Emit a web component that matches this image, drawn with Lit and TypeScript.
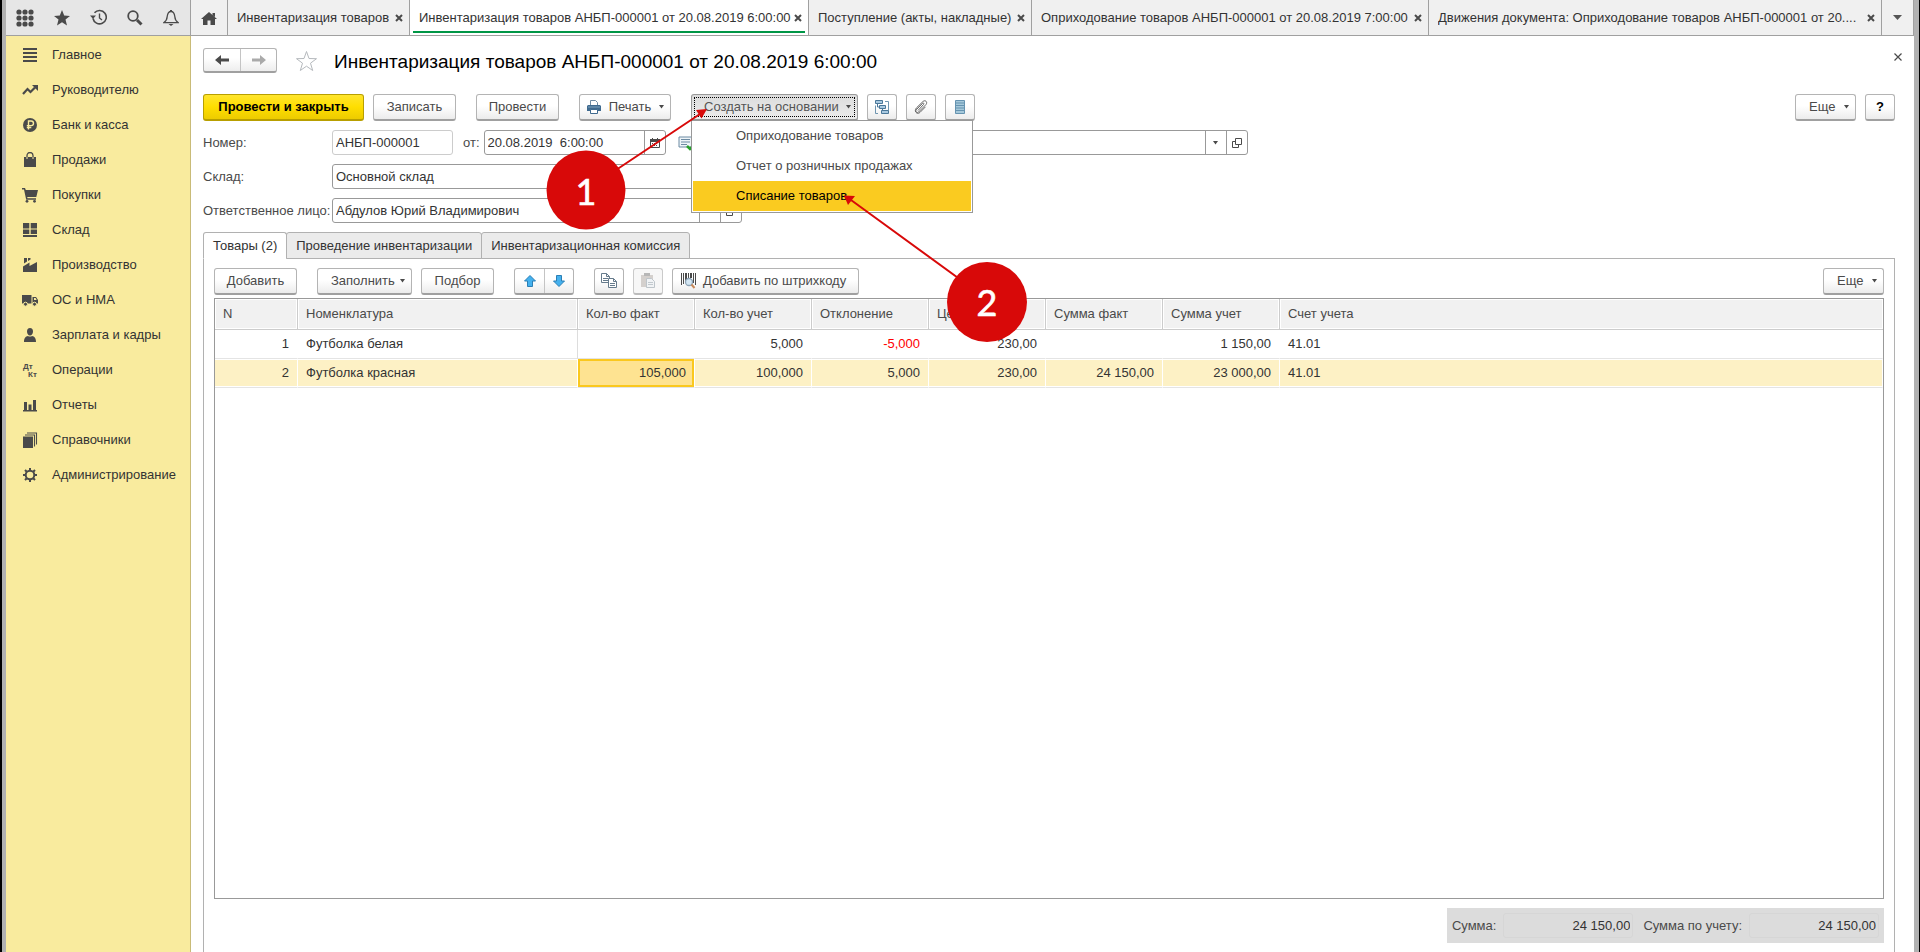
import { LitElement, html, css, svg } from "lit";
import { customElement } from "lit/decorators.js";

const svgIcon = (size: number, body: unknown, h = size) =>
  html`<svg width=${size} height=${h} viewBox="0 0 ${size} ${h}" fill="#4a4a4a" aria-hidden="true">${body}</svg>`;

const caret = html`<svg class="caret" width="5" height="4" viewBox="0 0 5 4" aria-hidden="true"><path d="M0 0h5L2.5 3.5z" fill="#4a4a4a" /></svg>`;
const openGlyph = svgIcon(10, svg`<path d="M3.5 .5h6v6h-6z M3.5 3.5h-3v6h6v-3" fill="none" stroke="#4a4a4a"/>`);
const cross = svgIcon(8, svg`<path d="M1 1l6 6M7 1l-6 6" stroke="#4a4a4a" stroke-width="2"/>`);
const thinCross = svgIcon(8, svg`<path d="M.5 .5l7 7M7.5 .5l-7 7" stroke="#4a4a4a" stroke-width="1.2"/>`);

const dots = [3, 9, 15].flatMap((y) => [3, 9, 15].map((x) => svg`<circle cx=${x} cy=${y} r="2.6"/>`));
const star = "M8 0l2.2 5.6 5.8.3-4.5 3.7L13 15.6 8 12.2 3 15.6 4.500 9.600 0 5.900l5.800-.3z";

const topIcons = [
  { name: "Меню функций", icon: svgIcon(18, dots) },
  { name: "Избранное", icon: svgIcon(16, svg`<path d=${star}/>`) },
  { name: "История", icon: svgIcon(17, svg`<path d="M3 9.500A6.700 6.700 0 1 0 4.500 3.800" fill="none" stroke="#4a4a4a" stroke-width="1.600"/><path d="M0 6.500h6L3 10z"/><path d="M9.500 4.500v4.500l2.500 2" fill="none" stroke="#4a4a4a" stroke-width="1.400"/>`) },
  { name: "Поиск", icon: svgIcon(16, svg`<circle cx="6" cy="6" r="4.800" fill="none" stroke="#4a4a4a" stroke-width="1.800"/><path d="M10 10l4.500 4.500" stroke="#4a4a4a" stroke-width="3"/>`) },
  { name: "Оповещения", icon: svgIcon(16, svg`<path d="M8 1.500c-3 0-3.500 2.500-3.800 5C4 9.500 3.200 11 1 12.600h14C12.800 11 12 9.500 11.800 6.500 11.500 4 11 1.500 8 1.500z" fill="none" stroke="#4a4a4a" stroke-width="1.300"/><path d="M7 0h2v2H7zM5.500 14h5L8 16z"/>`) },
];

const sections = [
  { name: "Главное", icon: svg`<path d="M1 1h14v2H1zM1 5h14v2H1zM1 9h14v2H1zM1 13h14v2H1z"/>` },
  { name: "Руководителю", icon: svg`<path d="M1 12l4.500-5 3 3L13 5.500" fill="none" stroke="#4a4a4a" stroke-width="2.200"/><path d="M10 3h6v6z"/>` },
  { name: "Банк и касса", icon: svg`<circle cx="8" cy="8" r="7"/><path d="M6.500 12.500v-8.500h2.700a2.300 2.300 0 0 1 0 4.600H4.800M4.800 10.500h4.500" fill="none" stroke="#f9eb9e" stroke-width="1.400"/>` },
  { name: "Продажи", icon: svg`<path d="M2 5h12v10H2z"/><path d="M5 7V3.500a2.500 2.500 0 0 1 6 0V7" fill="none" stroke="#4a4a4a" stroke-width="1.300"/><path d="M5 5v2M11 5v2" stroke="#f9eb9e"/>` },
  { name: "Покупки", icon: svg`<path d="M0 1h3l.8 2H16l-1.700 7H5.200l.3 1.300H14v1.500H4.200L2 2.500H0z"/><circle cx="5" cy="14.300" r="1.400"/><circle cx="12.500" cy="14.300" r="1.400"/>` },
  { name: "Склад", icon: svg`<path d="M1 1h6.300v5.500H1zM8.700 1H15v5.500H8.700zM1 7.500h6.300V12H1zM8.700 7.500H15V12H8.700zM1 13h14v2H1z"/>` },
  { name: "Производство", icon: svg`<path d="M1 15V9.500l6.500-4V9L15 5v10zM2 1h3v3.500L2 6.500zM6 1h2.500v1.500L6 4z"/>` },
  { name: "ОС и НМА", icon: svg`<path d="M0 3h9.500v8.500H0zM10.500 5H14l2 3v3.500h-5.500z"/><path d="M12 6h1.600l1 2H12z" fill="#f9eb9e"/><circle cx="3.500" cy="12.200" r="2" stroke="#f9eb9e"/><circle cx="12.500" cy="12.200" r="2" stroke="#f9eb9e"/>` },
  { name: "Зарплата и кадры", icon: svg`<path d="M8 1c2 0 3 1.500 3 3.500S9.800 8.500 8 8.500 5 6.500 5 4.500 6 1 8 1zM2 15c0-4 1.500-5.500 4-6 1 .8 3 .8 4 0 2.500.5 4 2 4 6z"/>` },
  { name: "Операции", icon: svg`<text x="1" y="7" class="mini">Дт</text><text x="6" y="15" class="mini">Кт</text>` },
  { name: "Отчеты", icon: svg`<path d="M1 13h14v1.500H1zM2 5h3v8H2zM6.500 7.500h3V13h-3zM11 3h3v10h-3z"/>` },
  { name: "Справочники", icon: svg`<path d="M1 4.500h10V16H1z"/><path d="M3 3h9.500v11.500M5 1h9.500v11.500" fill="none" stroke="#4a4a4a" stroke-width="1.100"/>` },
  { name: "Администрирование", icon: svg`<circle cx="8" cy="8" r="4.300" fill="none" stroke="#4a4a4a" stroke-width="2"/><path d="M8 1v2.500M8 12.500V15M1 8h2.500M12.500 8H15M3 3l1.800 1.800M11.200 11.200L13 13M13 3l-1.800 1.800M4.800 11.200L3 13" stroke="#4a4a4a" stroke-width="2"/>` },
];

const windows = [
  { title: "Инвентаризация товаров", size: "w1" },
  { title: "Инвентаризация товаров АНБП-000001 от 20.08.2019 6:00:00", size: "w2", active: true },
  { title: "Поступление (акты, накладные)", size: "w3" },
  { title: "Оприходование товаров АНБП-000001 от 20.08.2019 7:00:00", size: "w4" },
  { title: "Движения документа: Оприходование товаров АНБП-000001 от 20....", size: "w5" },
];

const columns = ["N", "Номенклатура", "Кол-во факт", "Кол-во учет", "Отклонение", "Цена", "Сумма факт", "Сумма учет", "Счет учета"];
const rows = [
  ["1", "Футболка белая", "", "5,000", "-5,000", "230,00", "", "1 150,00", "41.01"],
  ["2", "Футболка красная", "105,000", "100,000", "5,000", "230,00", "24 150,00", "23 000,00", "41.01"],
];

const printer = svgIcon(14, svg`<path d="M3.500 5V.5h5l2 2V5" fill="#fff" stroke="#6f8ba3"/><path d="M1 5h12l1 1v5H0V6z" fill="#3f6a8f"/><path d="M1 7h12" stroke="#7fa3c0"/><path d="M3.500 9.500h7v4h-7z" fill="#fff" stroke="#3f6a8f"/>`);
const structure = svgIcon(14, svg`<path d="M10 1.500h3.500v9M3 13.500H.5v-8" fill="none" stroke="#6f95b0"/><path d="M.5 .5h7v3h-7zM4.500 5.500h6v3h-6zM6.500 10.500h7v3h-7z" fill="#a9c9e0" stroke="#4a7799"/><path d="M2.500 3.500v3.500h2M7.500 8.500v2" fill="none" stroke="#4a7799"/>`);
const clip = svgIcon(16, svg`<path d="M5 11.500L10.500 5.500c.8-1 0-2-.9-1.200L3.200 10.800c-1.200 1.400.6 3.800 2.300 2.300L13 5.500c2-2.500-.8-5-3-3L3.500 8.800c-3 3.200.4 7.400 3.500 4.600l5.500-5.600" fill="none" stroke="#666" stroke-width="1"/>`);
const list = svgIcon(10, svg`<path d="M.5 .5h9v13h-9z" fill="#a5c8da" stroke="#6593b0"/><path d="M1 3h8M1 5.500h8M1 8h8M1 10.500h8" stroke="#6593b0"/>`, 14);
const calendar = svgIcon(10, svg`<path d="M.5 1.500h9v8h-9z" fill="none" stroke="#4a4a4a"/><path d="M0 1h10v3H0zM2 0h1v2H2zM7 0h1v2H7zM2 5h1v1H2zM4 5h1v1H4zM6 5h1v1H6zM2 7h1v1H2zM4 7h1v1H4zM6 7h1v1H6z"/>`);
const posted = svgIcon(16, svg`<path d="M1 2h13v10H1z" fill="#eef4f8" stroke="#6d8ba3"/><path d="M3 4.500h9M3 7h9M3 9.500h6" stroke="#6d8ba3"/><path d="M9 11l3 3 4-4" fill="none" stroke="#27a12b" stroke-width="2.500"/>`);
const arrowUp = svgIcon(12, svg`<path d="M6 .5L11.500 6H8.500v5.500h-5V6H.5z" fill="#45b1ee" stroke="#2b7fb5"/>`);
const arrowDown = svgIcon(12, svg`<path d="M6 11.500L.5 6h3V.5h5V6h3z" fill="#45b1ee" stroke="#2b7fb5"/>`);
const copyIcon = svgIcon(16, svg`<path d="M.5 .5h5l3 3v6h-8z" fill="#fff" stroke="#667b8c"/><path d="M5.500 .5v3h3M2 5.500h5M2 7.500h5" fill="none" stroke="#667b8c"/><path d="M7.500 5.500h5l3 3v6h-8z" fill="#fff" stroke="#667b8c"/><path d="M12.500 5.500v3h3M9 10.500h5M9 12.500h5" fill="none" stroke="#667b8c"/>`);
const pasteIcon = svgIcon(16, svg`<path d="M1 2h12v12H1z" fill="#c2bdb8"/><path d="M4 0h6v3H4z" fill="#999"/><path d="M6.500 5.500h5l3 3v6h-8z" fill="#eceff1" stroke="#a3adb5"/><path d="M8 9.500h5M8 11.500h5" stroke="#a9b3ba"/>`);
const barcode = svgIcon(16, svg`<path d="M1 0h1v12H1zM3 0h1v11H3zM5 0h2v9H5zM8 0h1v5H8zM10 0h2v5h-2zM13 0h1v10h-1zM15 0h1v12h-1z"/><circle cx="9" cy="9" r="3.500" fill="#d5e8f5" stroke="#8da3b5" stroke-width="1.300"/><path d="M11.500 11.500L14.500 15" stroke="#c98a5a" stroke-width="2"/>`);

@customElement("app-root")
export class AppRoot extends LitElement {
  static styles = css`
    :host {
      display: flex;
      flex-direction: column;
      position: relative;
      box-sizing: border-box;
      height: 100vh;
      overflow: hidden;
      background: #fff;
      color: #333;
      border-left: 2px solid #000;
      border-right: 1px solid #000;
      font: 13px/16px "Liberation Sans", Arial, sans-serif;
    }
    * { box-sizing: border-box; }
    svg { flex: none; display: block; }
    button, input { font: inherit; color: inherit; margin: 0; }
    button { padding: 0; border: 0; background: none; display: flex; align-items: center; justify-content: center; }
    .frame { flex: 1; min-height: 0; display: flex; flex-direction: column; border: solid #b1b1b1; border-width: 0 5px 0 4px; }
    .top { display: flex; height: 36px; background: #f0f0f0; border-bottom: 1px solid #a0a0a0; }
    .tools { width: 185px; flex: none; display: flex; align-items: center; justify-content: space-between; padding: 0 10px; background: #e6e6e6; border-right: 1px solid #a0a0a0; }
    .tools button { width: 18px; height: 18px; }
    .home { width: 37px; flex: none; border-right: 1px solid #a0a0a0; }
    .win { display: flex; align-items: center; min-width: 0; border-right: 1px solid #a0a0a0; padding: 0 6px 0 9px; position: relative; gap: 2px; }
    .win .name { flex: 1; min-width: 0; text-align: left; overflow: hidden; white-space: nowrap; text-overflow: ellipsis; display: block; }
    .win.active { background: #fff; }
    .win.active::after { content: ""; position: absolute; left: 3px; right: 3px; bottom: 2px; height: 2px; background: #009646; }
    .w1 { flex: 0 1 182px; } .w2 { flex: 0 1 399px; } .w3 { flex: 0 1 223px; } .w4 { flex: 0 1 397px; } .w5 { flex: 1 1 0; }
    .more { width: 32px; flex: none; border-right: 1px solid #a0a0a0; }
    .body { flex: 1; min-height: 0; display: flex; }
    nav { width: 185px; flex: none; background: #f9eb9e; border-right: 1px solid #c9bb78; padding-top: 1px; }
    nav a { display: flex; align-items: center; gap: 14px; height: 35px; padding-left: 16px; color: #333; text-decoration: none; }
    .mini { font: bold 8px "Liberation Sans", sans-serif; }
    main { flex: 1; min-width: 0; display: flex; flex-direction: column; padding: 12px 19px 0 12px; }
    .head { display: flex; align-items: center; height: 25px; }
    .pair { display: flex; border: 1px solid #b4b4b4; border-bottom: 2px solid #a0a0a0; border-radius: 3px; background: linear-gradient(#fff 40%, #ededed); }
    .pair button { width: 36px; }
    .pair button + button { border-left: 1px solid #c4c4c4; }
    .head .pair { width: 74px; height: 25px; margin-right: 18px; }
    h1 { flex: 1; margin: 2px 0 0 16px; font-size: 19px; line-height: 24px; font-weight: 400; color: #000; }
    .close { width: 18px; height: 18px; align-self: flex-start; margin-right: -12px; }
    .bar { display: flex; gap: 9px; height: 27px; margin-top: 21px; }
    .btn { flex: none; height: 27px; padding: 0 14px; gap: 7px; border: 1px solid #b4b4b4; border-bottom: 2px solid #a0a0a0; border-radius: 3px; background: linear-gradient(#fff 45%, #ececec); color: #4a4a4a; white-space: nowrap; }
    .primary { width: 161px; padding: 0; color: #000; font-weight: 700; background: linear-gradient(#ffe52e, #ffde00 50%, #edcc00); border-color: #b89f00; }
    .mid { width: 83px; padding: 0; } .sq { width: 30px; padding: 0; }
    .pick { width: 73px; padding: 0; }
    .drop { padding: 0 6px 0 13px; justify-content: space-between; gap: 4px; }
    .fill { width: 95px; }
    .print { width: 92px; padding-left: 7px; }
    .create { width: 167px; padding-left: 12px; position: relative; color: #555; background: linear-gradient(#dcdcdc, #ececec); border-color: #999; }
    .create::before { content: ""; position: absolute; inset: 2px; border: 1px dotted #000; }
    .bc { width: 187px; padding: 0 7px; justify-content: flex-start; }
    .gap { margin-left: 11px; }
    .push { margin-left: auto; }
    .etc { width: 61px; }
    .off { opacity: 0.7; background: #f4f4f4; }
    .help { color: #000; font-weight: 700; }
    .form { display: grid; grid-template-columns: 121px 1fr; column-gap: 8px; row-gap: 9px; margin-top: 9px; color: #4a4a4a; align-items: center; white-space: nowrap; }
    .line { display: flex; align-items: center; }
    .field { display: flex; height: 25px; border: 1px solid #999; border-radius: 3px; background: #fff; color: #333; }
    .field input { flex: 1; min-width: 0; width: 0; border: 0; padding: 0 3px; background: none; outline: none; }
    .field button { width: 21px; border-left: 1px solid #999; }
    .pale { border-color: #ccc; width: 121px; }
    .date { width: 182px; margin: 0 12px 0 4px; }
    .ot { margin-left: 10px; }
    .org { width: 541px; margin-left: 13px; }
    .long { width: 410px; }
    .tabs { display: flex; margin-top: 9px; position: relative; z-index: 1; }
    .tabs button { height: 27px; padding: 0 9px; border: 1px solid #b1b1b1; margin-left: -1px; background: #ebebeb; border-radius: 3px 3px 0 0; }
    .tabs .on { background: #fff; border-bottom-color: #fff; margin-left: 0; }
    .panel { flex: 1; min-height: 0; margin-top: -1px; border: 1px solid #b1b1b1; border-bottom: 0; padding: 9px 10px; display: flex; flex-direction: column; }
    .panel .bar { margin-top: 0; flex: none; }
    .panel .pair { width: 60px; }
    .panel .pair button { width: 29px; }
    .grid { flex: 1; min-height: 0; margin-top: 3px; border: 1px solid #999; }
    table { width: 100%; border-collapse: separate; border-spacing: 0; table-layout: fixed; }
    th { height: 31px; padding: 0 8px; font-weight: 400; text-align: left; color: #4a4a4a; background: #f1f1f1; border-right: 1px solid #ccc; border-bottom: 1px solid #ccc; box-shadow: inset 1px 1px #fff, inset -1px -1px #fff; }
    td { height: 29px; padding: 0 8px; text-align: right; border-bottom: 1px solid #e4e4e4; border-right: 1px solid transparent; white-space: nowrap; }
    th:last-child { border-right: 0; }
    td:nth-child(2), td:last-child { text-align: left; }
    td:nth-child(2) { border-right-color: #ddd; }
    .cur td { background: #fdf1c5; border-right-color: #fff; box-shadow: inset 0 -1px #fff, inset 0 1px #fff; }
    .cur .cell { background: #fee391; box-shadow: inset 0 0 0 2px #fac81e; }
    .neg { color: #f00; }
    .cn { width: 83px; } .cname { width: 280px; } .cnum { width: 117px; }
    .totals { flex: none; align-self: flex-end; display: flex; align-items: center; height: 35px; margin-top: 9px; padding: 0 5px; background: #dcdcdc; color: #4a4a4a; }
    .totals input { width: 130px; height: 25px; margin-left: 7px; padding: 0 2px; text-align: right; border: 1px solid #d6d6d6; border-radius: 3px; background: transparent; color: #333; }
    .totals label + input + label { margin-left: 10px; }
    .anchor { position: relative; }
    .menu { position: absolute; left: 0; top: 26px; width: 282px; padding: 0 1px 1px; background: #fff; border: 1px solid #999; z-index: 3; }
    .menu button { width: 100%; height: 30px; padding-left: 43px; justify-content: flex-start; color: #4a4a4a; }
    .menu .hot { background: #facb20; color: #000; }
    .notes { position: absolute; left: -2px; top: 0; z-index: 5; pointer-events: none; }
    .digit { font: 36px Lato, sans-serif; fill: #fff; stroke: #fff; stroke-width: 0.6px; text-anchor: middle; }
  `;

  private tail() {
    return html`<button aria-label="Выбрать">${caret}</button><button aria-label="Открыть">${openGlyph}</button>`;
  }

  render() {
    return html`
      <div class="frame">
        <header class="top">
          <div class="tools">${topIcons.map((t) => html`<button aria-label=${t.name}>${t.icon}</button>`)}</div>
          <button class="home" aria-label="Начальная страница">${svgIcon(16, svg`<path d="M8 2l8 7h-2v6H9.500v-4.500h-3V15H2V9H0zM11.500 3H14v4l-2.500-2z"/>`)}</button>
          ${windows.map((w) => html`<div class="win ${w.size} ${w.active ? "active" : ""}">
            <button class="name">${w.title}</button><button aria-label="Закрыть">${cross}</button></div>`)}
          <button class="more" aria-label="Все окна"><svg width="9" height="5" viewBox="0 0 9 5"><path d="M0 0h9L4.500 5z" fill="#555" /></svg></button>
        </header>
        <div class="body">
          <nav>${sections.map((s) => html`<a href="#">${svgIcon(16, s.icon)}${s.name}</a>`)}</nav>
          <main>
            <div class="head">
              <div class="pair">
                <button aria-label="Назад">${svgIcon(14, svg`<path d="M0 6l6-5v3.500h8v3H6V11z"/>`, 12)}</button>
                <button aria-label="Вперед">${svgIcon(14, svg`<path d="M14 6L8 1v3.500H0v3h8V11z" fill="#aaa"/>`, 12)}</button>
              </div>
              <svg width="23" height="22" viewBox="0 0 23 22"><path d="M11.500 1.500l2.500 7 7.500.2-6 4.500 2.200 7.300-6.200-4.300-6.200 4.300 2.200-7.300-6-4.500 7.500-.2z" fill="#fff" stroke="#b5b9bd" /></svg>
              <h1>Инвентаризация товаров АНБП-000001 от 20.08.2019 6:00:00</h1>
              <button class="close" aria-label="Закрыть">${thinCross}</button>
            </div>
            <div class="bar">
              <button class="btn primary">Провести и закрыть</button>
              <button class="btn mid">Записать</button>
              <button class="btn mid gap">Провести</button>
              <button class="btn drop print gap">${printer}<span>Печать</span>${caret}</button>
              <div class="anchor gap">
                <button class="btn drop create">Создать на основании${caret}</button>
                <div class="menu">
                  <button>Оприходование товаров</button>
                  <button>Отчет о розничных продажах</button>
                  <button class="hot">Списание товаров</button>
                </div>
              </div>
              <button class="btn sq" aria-label="Структура подчиненности">${structure}</button>
              <button class="btn sq" aria-label="Файлы">${clip}</button>
              <button class="btn sq" aria-label="Список">${list}</button>
              <button class="btn drop etc push">Еще${caret}</button>
              <button class="btn sq help">?</button>
            </div>
            <div class="form">
              <label for="num">Номер:</label>
              <div class="line">
                <div class="field pale"><input id="num" value="АНБП-000001" /></div>
                <label class="ot" for="date">от:</label>
                <div class="field date"><input id="date" value="20.08.2019  6:00:00" /><button aria-label="Календарь">${calendar}</button></div>
                ${posted}
                <div class="field org"><input aria-label="Организация" />${this.tail()}</div>
              </div>
              <label for="store">Склад:</label>
              <div class="field long"><input id="store" value="Основной склад" />${this.tail()}</div>
              <label for="person">Ответственное лицо:</label>
              <div class="field long"><input id="person" value="Абдулов Юрий Владимирович" />${this.tail()}</div>
            </div>
            <div class="tabs">
              <button class="on">Товары (2)</button>
              <button>Проведение инвентаризации</button>
              <button>Инвентаризационная комиссия</button>
            </div>
            <section class="panel">
              <div class="bar">
                <button class="btn mid">Добавить</button>
                <button class="btn drop fill gap">Заполнить${caret}</button>
                <button class="btn pick">Подбор</button>
                <div class="pair gap"><button aria-label="Вверх">${arrowUp}</button><button aria-label="Вниз">${arrowDown}</button></div>
                <button class="btn sq gap" aria-label="Копировать">${copyIcon}</button>
                <button class="btn sq off" aria-label="Вставить">${pasteIcon}</button>
                <button class="btn bc">${barcode}Добавить по штрихкоду</button>
                <button class="btn drop etc push">Еще${caret}</button>
              </div>
              <div class="grid">
                <table>
                  <colgroup><col class="cn" /><col class="cname" />${[1, 2, 3, 4, 5, 6].map(() => html`<col class="cnum" />`)}<col /></colgroup>
                  <thead><tr>${columns.map((c) => html`<th>${c}</th>`)}</tr></thead>
                  <tbody>${rows.map((r, i) => html`<tr class=${i === 1 ? "cur" : ""}>
                    ${r.map((v, j) => html`<td class=${i === 1 && j === 2 ? "cell" : v.startsWith("-") ? "neg" : ""}>${v}</td>`)}</tr>`)}</tbody>
                </table>
              </div>
              <div class="totals">
                <label for="sum">Сумма:</label><input id="sum" readonly value="24 150,00" />
                <label for="sum2">Сумма по учету:</label><input id="sum2" readonly value="24 150,00" />
              </div>
            </section>
          </main>
        </div>
      </div>
      <svg class="notes" width="1040" height="360" viewBox="0 0 1040 360">
        <g stroke="#d80909" stroke-width="2"><path d="M586 190L700 114M987 299L851 200" /></g>
        <g fill="#d80909">
          <path d="M707 109l-11 1 5.500 8.500zM844 195.500l11 .5-7 9z" />
          <circle cx="586" cy="190" r="39.500" /><circle cx="987" cy="302" r="40" />
        </g>
        <text class="digit" x="586" y="205">1</text><text class="digit" x="987" y="316">2</text>
      </svg>
    `;
  }
}
